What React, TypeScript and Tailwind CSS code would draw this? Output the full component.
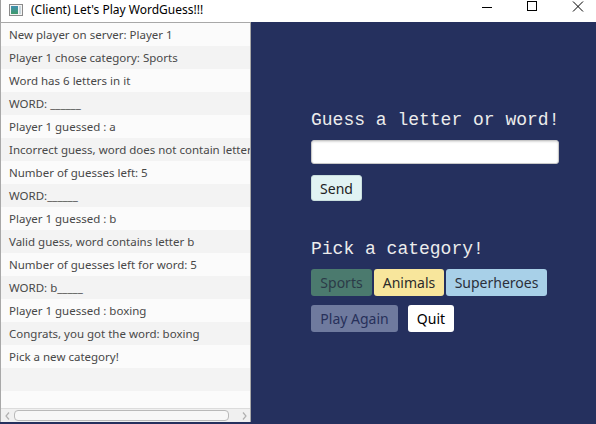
import React from "react";

const rows = [
  "New player on server: Player 1",
  "Player 1 chose category: Sports",
  "Word has 6 letters in it",
  "WORD: ______",
  "Player 1 guessed : a",
  "Incorrect guess, word does not contain letter a",
  "Number of guesses left: 5",
  "WORD:______",
  "Player 1 guessed : b",
  "Valid guess, word contains letter b",
  "Number of guesses left for word: 5",
  "WORD: b_____",
  "Player 1 guessed : boxing",
  "Congrats, you got the word: boxing",
  "Pick a new category!",
  "",
  "",
];

function AppIcon() {
  return (
    <svg width="14" height="12" viewBox="0 0 14 12">
      <defs>
        <linearGradient id="g" x1="0" y1="0" x2="0" y2="1">
          <stop offset="0" stopColor="#3f8fb0" />
          <stop offset="1" stopColor="#3f9a6a" />
        </linearGradient>
      </defs>
      <rect x="0.5" y="0.5" width="13" height="11" fill="#f4f4f4" stroke="#8a8a8a" />
      <rect x="2" y="2" width="7" height="8" fill="url(#g)" />
      <rect x="10" y="2" width="2" height="8" fill="#c9d6dc" />
    </svg>
  );
}

export default function App() {
  return (
    <div
      className="w-[596px] h-[424px] flex flex-col bg-white overflow-hidden"
      style={{ fontFamily: "'Noto Sans', sans-serif" }}
    >
      {/* Title bar */}
      <div className="h-[22px] flex items-center bg-white border-l border-[#a0a0a0] shrink-0">
        <div className="ml-[8px] mt-[-3px]">
          <AppIcon />
        </div>
        <div className="ml-[8px] text-[12px] text-black mt-[-3px]">(Client) Let's Play WordGuess!!!</div>
        <div className="ml-auto flex items-center h-full">
          <svg width="12" height="12" viewBox="0 0 12 12" className="absolute left-[481px] top-[1px]">
            <line x1="1" y1="6.5" x2="11" y2="6.5" stroke="#000" strokeWidth="1" />
          </svg>
          <svg width="12" height="12" viewBox="0 0 12 12" className="absolute left-[526px] top-[1px]">
            <rect x="1.5" y="0.5" width="9" height="9" fill="none" stroke="#000" strokeWidth="1" />
          </svg>
          <svg width="12" height="12" viewBox="0 0 12 12" className="absolute left-[572px] top-[1px]">
            <path d="M1 0.5 L11 10.5 M11 0.5 L1 10.5" stroke="#000" strokeWidth="1" />
          </svg>
        </div>
      </div>

      {/* Content */}
      <div className="flex flex-1 min-h-0 bg-[#25305e]">
        {/* Left list */}
        <div className="w-[251px] shrink-0 flex flex-col mb-[2px] bg-[#f4f4f4] border-l border-t border-r border-[#a8a8a8]">
          <div className="h-[385px] overflow-hidden">
            {rows.map((r, i) => (
              <div
                key={i}
                className={`h-[23px] flex items-center pl-[8px] whitespace-nowrap overflow-hidden text-[11.5px] text-[#484848] ${
                  i % 2 === 0 ? "bg-[#fbfbfb]" : "bg-[#f3f3f3]"
                }`}
              >
                {r}
              </div>
            ))}
          </div>
          {/* Horizontal scrollbar */}
          <div className="flex-1 flex items-center bg-[#f0f0f0] border-t border-[#dcdcdc]">
            <svg width="12" height="12" viewBox="0 0 12 12" className="ml-[1px]">
              <path d="M7 2.5 L4 6 L7 9.5" stroke="#b0b0b0" strokeWidth="1.2" fill="none" />
            </svg>
            <div className="w-[215px] h-[11px] rounded-[4px] border border-[#b9b9b9] bg-[#f7f7f7]" />
            <svg width="12" height="12" viewBox="0 0 12 12" className="ml-[9px]">
              <path d="M5 2.5 L8 6 L5 9.5" stroke="#b0b0b0" strokeWidth="1.2" fill="none" />
            </svg>
          </div>
        </div>

        {/* Right panel */}
        <div className="flex-1 flex flex-col pl-[60px] pt-[88px]">
          <div
            className="text-[18px] leading-[21px] text-[#ececec]"
            style={{ fontFamily: "'Liberation Mono', monospace" }}
          >
            Guess a letter or word!
          </div>
          <div className="mt-[9px] w-[248px] h-[24px] bg-white rounded-[3px] border border-[#c8c8c8] shadow-[inset_0_1px_2px_rgba(0,0,0,0.15)]" />
          <div className="mt-[11px] w-[51px] h-[26px] rounded-[3px] bg-[#e1f3f3] border border-[#c9dede] flex items-center justify-center text-[14px] text-[#222]">
            Send
          </div>
          <div
            className="mt-[38px] text-[18px] leading-[21px] text-[#ececec]"
            style={{ fontFamily: "'Liberation Mono', monospace" }}
          >
            Pick a category!
          </div>
          <div className="mt-[9px] flex gap-[2px]">
            <div className="w-[61px] h-[27px] rounded-[3px] bg-[#4b7a6e] flex items-center justify-center text-[14px] text-[#2b3a48]">
              Sports
            </div>
            <div className="w-[70px] h-[27px] rounded-[3px] bg-[#f8e69c] flex items-center justify-center text-[14px] text-[#2b2b2b]">
              Animals
            </div>
            <div className="w-[101px] h-[27px] rounded-[3px] bg-[#a8d0e8] flex items-center justify-center text-[14px] text-[#2b2f3a]">
              Superheroes
            </div>
          </div>
          <div className="mt-[9px] flex gap-[10px]">
            <div className="w-[87px] h-[27px] rounded-[3px] bg-[#6f7a9e] flex items-center justify-center text-[14px] text-[#27305a]">
              Play Again
            </div>
            <div className="w-[46px] h-[27px] rounded-[3px] bg-white flex items-center justify-center text-[14px] text-black">
              Quit
            </div>
          </div>
        </div>
      </div>
    </div>
  );
}
